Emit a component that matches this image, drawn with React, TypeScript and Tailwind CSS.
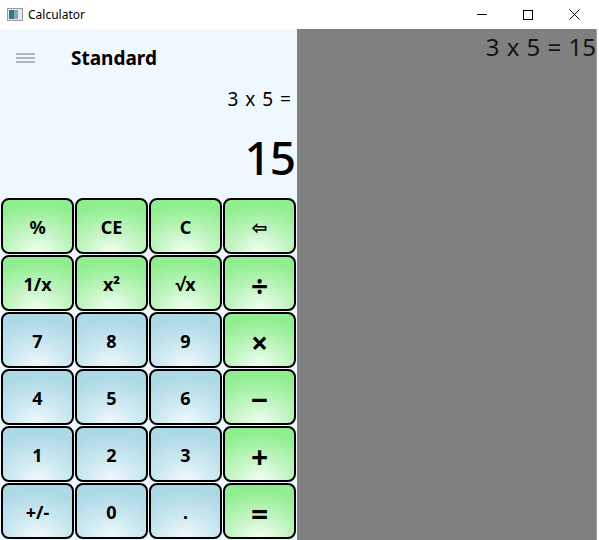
import React from 'react';

const font = { fontFamily: '"Noto Sans", "Open Sans", sans-serif' };

type Key = { label: string; kind: 'op' | 'num'; big?: boolean };

const keys: Key[] = [
  { label: '%', kind: 'op' },
  { label: 'CE', kind: 'op' },
  { label: 'C', kind: 'op' },
  { label: '⇦', kind: 'op' },
  { label: '1/x', kind: 'op' },
  { label: 'x²', kind: 'op' },
  { label: '√x', kind: 'op' },
  { label: '÷', kind: 'op', big: true },
  { label: '7', kind: 'num' },
  { label: '8', kind: 'num' },
  { label: '9', kind: 'num' },
  { label: '×', kind: 'op', big: true },
  { label: '4', kind: 'num' },
  { label: '5', kind: 'num' },
  { label: '6', kind: 'num' },
  { label: '−', kind: 'op', big: true },
  { label: '1', kind: 'num' },
  { label: '2', kind: 'num' },
  { label: '3', kind: 'num' },
  { label: '+', kind: 'op', big: true },
  { label: '+/-', kind: 'num' },
  { label: '0', kind: 'num' },
  { label: '.', kind: 'num' },
  { label: '=', kind: 'op', big: true },
];

const CalcButton = ({ k }: { k: Key }) => (
  <button
    className={`flex items-center justify-center border-2 border-black rounded-[8px] text-black font-bold pt-[3px] ${
      k.kind === 'op'
        ? 'bg-[radial-gradient(ellipse_90%_90%_at_50%_100%,#f2fff2_0%,#c4f5c4_45%,#90ee90_100%)]'
        : 'bg-[radial-gradient(ellipse_90%_90%_at_50%_100%,#f2f9fc_0%,#cde9f1_45%,#add8e6_100%)]'
    } ${k.big ? 'text-[30px] pt-[5px]' : 'text-[18px]'}`}
    style={font}
  >
    {k.label}
  </button>
);

const TitleBar = () => (
  <div className="flex items-center h-[29px] bg-white shrink-0">
    <svg className="ml-[7px] w-[16px] h-[13px]" viewBox="0 0 16 13">
      <rect x="0.5" y="0.5" width="15" height="12" fill="#e8e8e8" stroke="#9a9a9a" />
      <rect x="2" y="2" width="5" height="9" fill="#3a7a6a" />
      <rect x="7" y="2" width="4" height="9" fill="#7fa8c8" />
    </svg>
    <span className="ml-[5px] text-[12px] text-black" style={{ fontFamily: '"Noto Sans", sans-serif' }}>
      Calculator
    </span>
    <div className="ml-auto flex items-center h-full">
      <div className="w-[46px] h-full flex items-center justify-center">
        <div className="w-[10px] h-px bg-black" />
      </div>
      <div className="w-[46px] h-full flex items-center justify-center">
        <div className="w-[10px] h-[10px] border border-black" />
      </div>
      <div className="w-[46px] h-full flex items-center justify-center">
        <svg width="11" height="11" viewBox="0 0 11 11" stroke="black" strokeWidth="1">
          <path d="M0.5 0.5 L10.5 10.5 M10.5 0.5 L0.5 10.5" />
        </svg>
      </div>
      <div className="w-[2px]" />
    </div>
  </div>
);

export default function App() {
  return (
    <div className="w-[599px] h-[540px] bg-white flex flex-col overflow-hidden" style={font}>
      <TitleBar />
      <div className="flex flex-1 min-h-0 pr-[2px]">
        <div className="w-[297px] bg-[#eff7ff] flex flex-col">
          <div className="h-[58px] flex items-center">
            <div className="ml-[16px] w-[19px] flex flex-col gap-[2px]">
              <div className="h-[2px] bg-[#b4b4bc]" />
              <div className="h-[2px] bg-[#b4b4bc]" />
              <div className="h-[2px] bg-[#b4b4bc]" />
            </div>
            <span className="ml-[36px] text-[19px] font-bold text-black">Standard</span>
          </div>
          <div className="h-[24px] flex items-center justify-end pr-[6px] text-[19px] text-black leading-none [word-spacing:2px]">
            3 x 5 =
          </div>
          <div className="h-[87px] flex items-center justify-end pr-[2px] pt-[4px] text-[46px] font-medium text-black leading-none tracking-[-1px]">
            15
          </div>
          <div className="flex-1 grid grid-cols-4 grid-rows-6 gap-px px-px pb-px">
            {keys.map((k) => (
              <CalcButton key={k.label} k={k} />
            ))}
          </div>
        </div>
        <div className="flex-1 bg-[#808080] flex justify-end items-start border-r border-[#a0a0a0]">
          <span className="mt-[3px] text-[24px] text-[#141414] leading-[30px] [word-spacing:1px]">3 x 5 = 15</span>
        </div>
      </div>
    </div>
  );
}
